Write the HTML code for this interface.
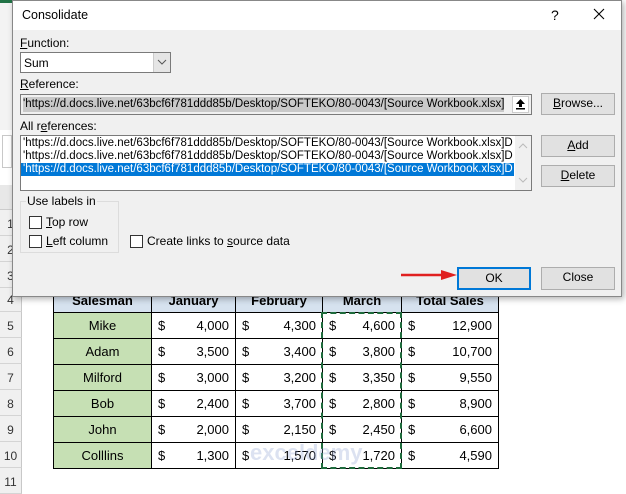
<!DOCTYPE html>
<html><head><meta charset="utf-8"><style>
*{box-sizing:border-box;margin:0;padding:0}
body{width:626px;height:492px;position:relative;overflow:hidden;background:#fff;font-family:"Liberation Sans",sans-serif;}
.a{position:absolute}
.dlg{left:12px;top:0;width:610px;height:297px;background:#f0f0f0;border:1px solid #888;box-shadow:2px 2px 6px rgba(0,0,0,.3)}
.t{font-size:12px;color:#000;white-space:nowrap}
.btn{position:absolute;background:#e1e1e1;border:1px solid #adadad;font-size:12px;text-align:center;line-height:19px}
.cb{position:absolute;width:13px;height:13px;border:1px solid #333;background:#fff}
table{border-collapse:collapse;position:absolute;left:53px;top:288px;font-family:"Liberation Sans",sans-serif;font-size:13px}
td{border:1px solid #000;height:26px;padding:0 6px}
th{border:1px solid #000;height:24px;background:#d6e2ef;font-size:13px}
td.n{background:#c6e0b4;text-align:center}
.rh{position:absolute;left:0;width:22px;border-bottom:1px solid #d4d4d4;border-right:1px solid #c8c8c8;background:#f0f0f0;font-size:12px;color:#333;text-align:center;padding-top:7px}
</style></head><body>
<div class="a" style="left:0;top:0;width:12px;height:3px;background:#217346"></div>
<div class="a" style="left:0;top:3px;width:12px;height:127px;background:#f3f3f3"></div>
<div class="a" style="left:2px;top:135px;width:10px;height:33px;border:1px solid #c8c8c8;background:#fff"></div>
<div class="a" style="left:0;top:185px;width:12px;height:25px;background:#e8e8e8;border-bottom:1px solid #ccc"></div>
<div class="rh" style="top:210px;height:26px">1</div>
<div class="rh" style="top:236px;height:26px">2</div>
<div class="rh" style="top:262px;height:26px">3</div>
<div class="rh" style="top:288px;height:24px;padding-top:5px">4</div>
<div class="rh" style="top:312px;height:26px">5</div>
<div class="rh" style="top:338px;height:26px">6</div>
<div class="rh" style="top:364px;height:26px">7</div>
<div class="rh" style="top:390px;height:26px">8</div>
<div class="rh" style="top:416px;height:26px">9</div>
<div class="rh" style="top:442px;height:26px">10</div>
<div class="rh" style="top:468px;height:26px">11</div>
<table>
<tr><th style="width:98px">Salesman</th><th style="width:84px">January</th><th style="width:87px">February</th><th style="width:79px">March</th><th style="width:97px">Total Sales</th></tr>
<tr><td class="n">Mike</td><td>$<span style="float:right">4,000</span></td><td>$<span style="float:right">4,300</span></td><td>$<span style="float:right">4,600</span></td><td>$<span style="float:right">12,900</span></td></tr>
<tr><td class="n">Adam</td><td>$<span style="float:right">3,500</span></td><td>$<span style="float:right">3,400</span></td><td>$<span style="float:right">3,800</span></td><td>$<span style="float:right">10,700</span></td></tr>
<tr><td class="n">Milford</td><td>$<span style="float:right">3,000</span></td><td>$<span style="float:right">3,200</span></td><td>$<span style="float:right">3,350</span></td><td>$<span style="float:right">9,550</span></td></tr>
<tr><td class="n">Bob</td><td>$<span style="float:right">2,400</span></td><td>$<span style="float:right">3,700</span></td><td>$<span style="float:right">2,800</span></td><td>$<span style="float:right">8,900</span></td></tr>
<tr><td class="n">John</td><td>$<span style="float:right">2,000</span></td><td>$<span style="float:right">2,150</span></td><td>$<span style="float:right">2,450</span></td><td>$<span style="float:right">6,600</span></td></tr>
<tr><td class="n">Colllins</td><td>$<span style="float:right">1,300</span></td><td>$<span style="float:right">1,570</span></td><td>$<span style="float:right">1,720</span></td><td>$<span style="float:right">4,590</span></td></tr>
</table>
<div class="a" style="left:321px;top:312px;width:81px;height:157px;border:2px dashed #1e6b3c"></div>
<div class="a" style="left:250px;top:440px;font-size:22px;font-weight:bold;color:rgba(140,160,210,.3)">exceldemy</div>

<div class="a dlg">
 <div class="a" style="left:0;top:0;width:608px;height:29px;background:#fff"></div>
 <div class="a t" style="left:9px;top:7px;font-size:12.5px">Consolidate</div>
 <div class="a t" style="left:538px;top:6px;font-size:14px">?</div>
 <svg class="a" style="left:580px;top:7px" width="12" height="12"><path d="M1 1L11 11M11 1L1 11" stroke="#000" stroke-width="1.1"/></svg>

 <div class="a t" style="left:7px;top:35px"><u>F</u>unction:</div>
 <div class="a" style="left:7px;top:51px;width:151px;height:21px;border:1px solid #7a7a7a;background:#fff"></div>
 <div class="a t" style="left:11px;top:55px">Sum</div>
 <div class="a" style="left:140px;top:52px;width:17px;height:19px;background:#e5e5e5;border-left:1px solid #ccc"></div>
 <svg class="a" style="left:144px;top:58px" width="10" height="6"><path d="M1 1L5 5L9 1" stroke="#555" fill="none"/></svg>

 <div class="a t" style="left:7px;top:76px"><u>R</u>eference:</div>
 <div class="a" style="left:7px;top:93px;width:512px;height:21px;border:1px solid #7a7a7a;background:#f0f0f0"></div>
 <div class="a t" style="left:10px;top:96px;height:15px;background:#c9c9c9;font-size:11.5px;line-height:15px">'https://d.docs.live.net/63bcf6f781ddd85b/Desktop/SOFTEKO/80-0043/[Source Workbook.xlsx]</div>
 <div class="a" style="left:499px;top:95px;width:17px;height:17px;background:#fff;border:1px solid #ccc"></div>
 <svg class="a" style="left:502px;top:97px" width="11" height="12"><path d="M5.5 1L1 6H4V9H7V6H10Z" fill="#000"/><rect x="1" y="10" width="9" height="1.5" fill="#000"/></svg>
 <div class="btn" style="left:528px;top:92px;width:74px;height:22px"><u>B</u>rowse...</div>

 <div class="a t" style="left:7px;top:118px">All r<u>e</u>ferences:</div>
 <div class="a" style="left:7px;top:134px;width:512px;height:56px;border:1px solid #7a7a7a;background:#fff"></div>
 <div class="a t" style="left:10px;top:136px;font-size:11.5px;line-height:13px">'https://d.docs.live.net/63bcf6f781ddd85b/Desktop/SOFTEKO/80-0043/[Source Workbook.xlsx]D</div>
 <div class="a t" style="left:10px;top:149px;font-size:11.5px;line-height:13px">'https://d.docs.live.net/63bcf6f781ddd85b/Desktop/SOFTEKO/80-0043/[Source Workbook.xlsx]D</div>
 <div class="a" style="left:8px;top:162px;width:493px;height:13px;background:#0078d7"></div>
 <div class="a t" style="left:10px;top:162px;font-size:11.5px;line-height:13px;color:#fff">'https://d.docs.live.net/63bcf6f781ddd85b/Desktop/SOFTEKO/80-0043/[Source Workbook.xlsx]D</div>
 <div class="a" style="left:502px;top:135px;width:16px;height:54px;background:#f0f0f0"></div>
 <svg class="a" style="left:505px;top:142px" width="10" height="6"><path d="M1 5L5 1L9 5" stroke="#bbb" fill="none"/></svg>
 <svg class="a" style="left:505px;top:176px" width="10" height="6"><path d="M1 1L5 5L9 1" stroke="#bbb" fill="none"/></svg>
 <div class="btn" style="left:528px;top:134px;width:74px;height:22px"><u>A</u>dd</div>
 <div class="btn" style="left:528px;top:164px;width:74px;height:22px"><u>D</u>elete</div>

 <div class="a" style="left:7px;top:200px;width:99px;height:52px;border:1px solid #dcdcdc"></div>
 <div class="a t" style="left:13px;top:193px;background:#f0f0f0;padding:0 1px">Use labels in</div>
 <div class="cb" style="left:16px;top:215px"></div><div class="a t" style="left:33px;top:214px"><u>T</u>op row</div>
 <div class="cb" style="left:16px;top:234px"></div><div class="a t" style="left:33px;top:233px"><u>L</u>eft column</div>
 <div class="cb" style="left:117px;top:234px"></div><div class="a t" style="left:134px;top:233px">Create links to <u>s</u>ource data</div>

 <svg class="a" style="left:386px;top:267px" width="60" height="14"><path d="M2 7H46" stroke="#e02020" stroke-width="2.5"/><path d="M42 2L58 7L42 12Z" fill="#e02020"/></svg>
 <div class="btn" style="left:444px;top:266px;width:74px;height:23px;border:2px solid #0078d7;line-height:19px">OK</div>
 <div class="btn" style="left:528px;top:266px;width:74px;height:23px">Close</div>
</div>
</body></html>
